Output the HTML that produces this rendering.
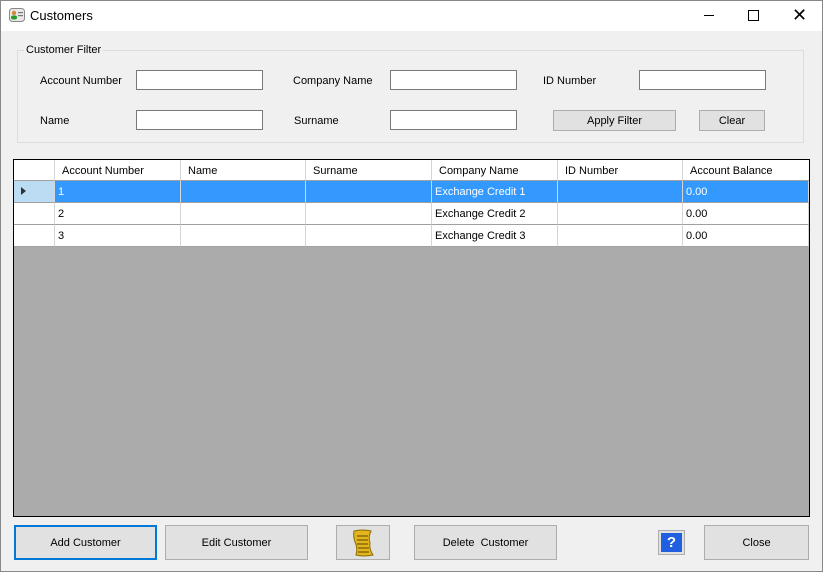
<!DOCTYPE html>
<html><head><style>
body{margin:0;width:823px;height:572px;overflow:hidden;font-family:"Liberation Sans",sans-serif;font-size:11px;color:#000;background:#f0f0f0;position:relative}
.title{position:absolute;left:0;top:0;width:823px;height:31px;background:#fff}
.a{position:absolute}
.tb{position:absolute;border:1px solid #7a7a7a;background:#fff;box-sizing:border-box;height:20px}
.btn{position:absolute;background:#e1e1e1;border:1px solid #adadad;box-sizing:border-box;display:flex;align-items:center;justify-content:center;padding-top:1px}
.lbl{position:absolute;font-size:11px}
.grid{position:absolute;left:13px;top:159px;width:797px;height:358px;box-sizing:border-box;border:1px solid #000;background:#ababab}
.cell{position:absolute;box-sizing:border-box;border-right:1px solid #d5d5d5;border-bottom:1px solid #a0a0a0;padding-left:3px;line-height:23px;height:22px;background:#fff}
</style></head><body>
<div class="title">
<svg class="a" style="left:9px;top:8px" width="16" height="14" viewBox="0 0 16 14"><rect x="0.5" y="0.5" width="15" height="13" rx="3" fill="#e8e8e8" stroke="#888"/><circle cx="5" cy="5" r="2.2" fill="#d08a3a"/><rect x="2" y="7.5" width="6" height="4" rx="2" fill="#2a9a2a"/><rect x="9" y="4" width="5" height="1.2" fill="#777"/><rect x="9" y="7" width="5" height="1.2" fill="#777"/></svg>
<div class="lbl" style="left:30px;top:8px;font-size:13px">Customers</div>
<div class="a" style="left:704px;top:15px;width:10px;height:1px;background:#000"></div>
<div class="a" style="left:748px;top:10px;width:9px;height:9px;border:1px solid #000"></div>
<div class="a" style="left:792px;top:4px;font-size:18px;line-height:22px">✕</div>
</div>
<div class="a" style="left:17px;top:50px;width:787px;height:93px;border:1px solid #dcdcdc;box-sizing:border-box"></div>
<div class="lbl" style="left:24px;top:44px;background:#f0f0f0;padding:0 2px">Customer Filter</div>
<div class="lbl" style="left:40px;top:75px">Account Number</div>
<div class="lbl" style="left:293px;top:75px">Company Name</div>
<div class="lbl" style="left:543px;top:75px">ID Number</div>
<div class="lbl" style="left:40px;top:115px">Name</div>
<div class="lbl" style="left:294px;top:115px">Surname</div>
<div class="tb" style="left:136px;top:70px;width:127px"></div>
<div class="tb" style="left:390px;top:70px;width:127px"></div>
<div class="tb" style="left:639px;top:70px;width:127px"></div>
<div class="tb" style="left:136px;top:110px;width:127px"></div>
<div class="tb" style="left:390px;top:110px;width:127px"></div>
<div class="btn" style="left:553px;top:110px;width:123px;height:21px">Apply Filter</div>
<div class="btn" style="left:699px;top:110px;width:66px;height:21px">Clear</div>
<div class="grid">
 <div class="a" style="left:0;top:0;width:795px;height:21px;background:#fff;border-bottom:1px solid #a0a0a0;box-sizing:border-box"></div>
 <div class="cell" style="left:0;top:0;width:41px;height:21px"></div>
 <div class="cell" style="left:41px;top:0;width:126px;height:21px;padding-left:7px">Account Number</div>
 <div class="cell" style="left:167px;top:0;width:125px;height:21px;padding-left:7px">Name</div>
 <div class="cell" style="left:292px;top:0;width:126px;height:21px;padding-left:7px">Surname</div>
 <div class="cell" style="left:418px;top:0;width:126px;height:21px;padding-left:7px">Company Name</div>
 <div class="cell" style="left:544px;top:0;width:125px;height:21px;padding-left:7px">ID Number</div>
 <div class="cell" style="left:669px;top:0;width:126px;height:21px;padding-left:7px;border-right:none">Account Balance</div>
</div>
<div class="a" style="left:14px;top:181px">
 <div class="cell" style="left:0;top:0;width:41px;background:#bcdcf4"><span style="position:absolute;left:7px;top:6px;width:0;height:0;border-left:5px solid #333;border-top:4px solid transparent;border-bottom:4px solid transparent"></span></div>
 <div class="cell" style="left:41px;top:0;width:126px;background:#3399ff;color:#fff">1</div>
 <div class="cell" style="left:167px;top:0;width:125px;background:#3399ff"></div>
 <div class="cell" style="left:292px;top:0;width:126px;background:#3399ff"></div>
 <div class="cell" style="left:418px;top:0;width:126px;background:#3399ff;color:#fff">Exchange Credit 1</div>
 <div class="cell" style="left:544px;top:0;width:125px;background:#3399ff"></div>
 <div class="cell" style="left:669px;top:0;width:126px;background:#3399ff;color:#fff">0.00</div>
 <div class="cell" style="left:0;top:22px;width:41px"></div>
 <div class="cell" style="left:41px;top:22px;width:126px">2</div>
 <div class="cell" style="left:167px;top:22px;width:125px"></div>
 <div class="cell" style="left:292px;top:22px;width:126px"></div>
 <div class="cell" style="left:418px;top:22px;width:126px">Exchange Credit 2</div>
 <div class="cell" style="left:544px;top:22px;width:125px"></div>
 <div class="cell" style="left:669px;top:22px;width:126px">0.00</div>
 <div class="cell" style="left:0;top:44px;width:41px"></div>
 <div class="cell" style="left:41px;top:44px;width:126px">3</div>
 <div class="cell" style="left:167px;top:44px;width:125px"></div>
 <div class="cell" style="left:292px;top:44px;width:126px"></div>
 <div class="cell" style="left:418px;top:44px;width:126px">Exchange Credit 3</div>
 <div class="cell" style="left:544px;top:44px;width:125px"></div>
 <div class="cell" style="left:669px;top:44px;width:126px">0.00</div>
</div>
<div class="btn" style="left:14px;top:525px;width:143px;height:35px;border:1px solid #0078d7;box-shadow:inset 0 0 0 1px #0078d7">Add Customer</div>
<div class="btn" style="left:165px;top:525px;width:143px;height:35px">Edit Customer</div>
<div class="btn" style="left:336px;top:525px;width:54px;height:35px">
<svg width="28" height="30" viewBox="0 0 28 30"><path d="M5 3 Q14 1 22 3 Q19 9 21 15 Q20 21 24 27 Q15 29 7 27 Q9 20 6 14 Q4 8 5 3Z" fill="#e2b520" stroke="#8a6a00"/><path d="M8 8h11M8 12h11M8 16h11M9 20h11M9 24h11" stroke="#8a6a00" stroke-width="1.5"/></svg></div>
<div class="btn" style="left:414px;top:525px;width:143px;height:35px">Delete&nbsp; Customer</div>
<div class="btn" style="left:658px;top:530px;width:27px;height:25px;padding:0"><div style="width:21px;height:19px;background:#1f5fe0;color:#fff;font-weight:bold;font-size:15px;text-align:center;line-height:19px">?</div></div>
<div class="btn" style="left:704px;top:525px;width:105px;height:35px">Close</div>
<div class="a" style="left:0;top:0;width:821px;height:570px;border:1px solid #888"></div>
</body></html>
